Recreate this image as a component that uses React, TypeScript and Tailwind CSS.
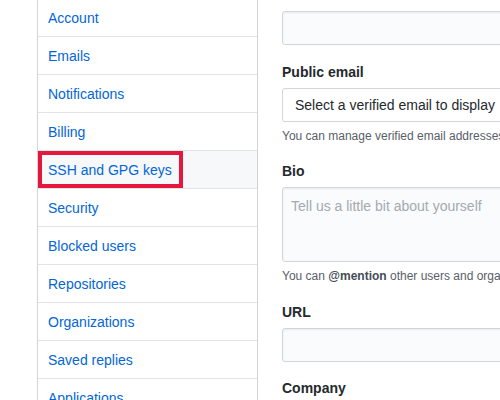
import React from "react";

const items = [
  "Account",
  "Emails",
  "Notifications",
  "Billing",
  "SSH and GPG keys",
  "Security",
  "Blocked users",
  "Repositories",
  "Organizations",
  "Saved replies",
  "Applications",
];

export default function App() {
  return (
    <div
      className="w-[500px] h-[400px] overflow-hidden bg-white text-[#24292e]"
      style={{ fontFamily: '"Liberation Sans", Arial, Helvetica, sans-serif' }}
    >
      <div className="flex items-start">
        <nav className="ml-[37px] mt-[-2px] w-[221px] shrink-0 border border-[#d1d5da] rounded-[3px]">
          {items.map((label, i) => (
            <div
              key={label}
              className={
                i === 4
                  ? "relative border-b border-[#e1e4e8] bg-[#f6f8fa] pt-[9px] pb-[7px] pl-[10px] pr-[10px] text-[14px] leading-[21px] text-[#0366d6]"
                  : "relative border-b border-[#e1e4e8] pt-[9px] pb-[7px] pl-[10px] pr-[10px] text-[14px] leading-[21px] text-[#0366d6]"
              }
            >
              {label}
              {i === 4 && (
                <div className="absolute left-0 top-0 w-[145px] h-[37px] border-[4px] border-[#e5173c]" />
              )}
            </div>
          ))}
        </nav>
        <main className="ml-[24px] mt-[11px] w-[300px] shrink-0 text-[14px]">
          <div className="h-[34px] w-[260px] rounded-[3px] border border-[#d1d5da] bg-[#fafbfc] shadow-[inset_0_1px_2px_rgba(27,31,35,0.075)]" />
          <div className="mt-[17px] font-bold text-[14px] leading-[20px]">Public email</div>
          <div className="mt-[6px] h-[34px] w-[260px] rounded-[3px] border border-[#d1d5da] bg-white pl-[12px] text-[14px] leading-[32px] whitespace-nowrap">
            Select a verified email to display
          </div>
          <div className="mt-[5px] text-[12px] leading-[18px] text-[#586069] whitespace-nowrap">
            You can manage verified email addresses in your email settings.
          </div>
          <div className="mt-[16px] font-bold text-[14px] leading-[20px]">Bio</div>
          <div className="mt-[6px] h-[75px] w-[260px] rounded-[3px] border border-[#d1d5da] bg-[#fafbfc] px-[8px] pt-[8px] text-[14px] leading-[20px] text-[#a3aab1] whitespace-nowrap shadow-[inset_0_1px_2px_rgba(27,31,35,0.075)]">
            Tell us a little bit about yourself
          </div>
          <div className="mt-[5px] text-[12px] leading-[18px] text-[#586069] whitespace-nowrap">
            You can <span className="font-bold text-[#444d56]">@mention</span> other users and organizations to link to them.
          </div>
          <div className="mt-[17px] font-bold text-[14px] leading-[20px]">URL</div>
          <div className="mt-[6px] h-[34px] w-[260px] rounded-[3px] border border-[#d1d5da] bg-[#fafbfc] shadow-[inset_0_1px_2px_rgba(27,31,35,0.075)]" />
          <div className="mt-[16px] font-bold text-[14px] leading-[20px]">Company</div>
        </main>
      </div>
    </div>
  );
}
